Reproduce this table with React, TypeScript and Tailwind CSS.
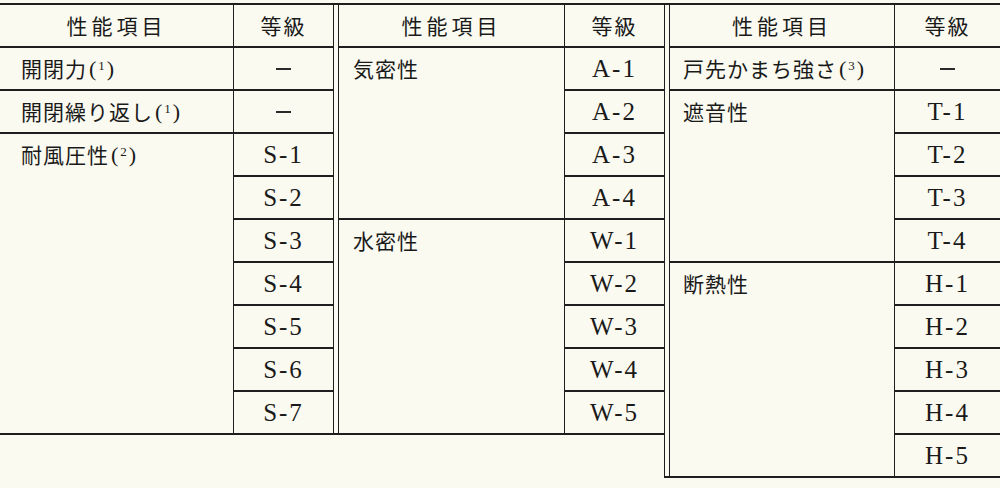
import React from "react";

type Group = { label: React.ReactNode; grades: string[] };

function Note({ n }: { n: string }) {
  return (
    <span className="ml-[2px] font-['Liberation_Serif'] text-[22px] tracking-[2px]">
      (<sup className="text-[13px]">{n}</sup>)
    </span>
  );
}

const left: Group[] = [
  { label: <>開閉力<Note n="1" /></>, grades: ["—"] },
  { label: <>開閉繰り返し<Note n="1" /></>, grades: ["—"] },
  { label: <>耐風圧性<Note n="2" /></>, grades: ["S-1", "S-2", "S-3", "S-4", "S-5", "S-6", "S-7"] },
];

const middle: Group[] = [
  { label: "気密性", grades: ["A-1", "A-2", "A-3", "A-4"] },
  { label: "水密性", grades: ["W-1", "W-2", "W-3", "W-4", "W-5"] },
];

const right: Group[] = [
  { label: <>戸先かまち強さ<Note n="3" /></>, grades: ["—"] },
  { label: "遮音性", grades: ["T-1", "T-2", "T-3", "T-4"] },
  { label: "断熱性", grades: ["H-1", "H-2", "H-3", "H-4", "H-5"] },
];

function Grade({ g }: { g: string }) {
  return (
    <div className="flex h-[43px] items-center justify-center border-b-2 border-[#1e1e1e]">
      {g === "—" ? (
        <span className="block h-[2px] w-[15px] bg-[#2a2a2a]" />
      ) : (
        <span className="font-['Liberation_Serif'] text-[25px] tracking-[2px]">{g}</span>
      )}
    </div>
  );
}

function Table({
  groups,
  width,
  labelWidth,
  pad,
}: {
  groups: Group[];
  width: string;
  labelWidth: string;
  pad: string;
}) {
  return (
    <div className={`${width} flex flex-col border-t-2 border-[#1e1e1e]`}>
      <div className="flex h-[43px] border-b-2 border-[#1e1e1e]">
        <div className={`${labelWidth} flex items-center justify-center border-r border-[#1e1e1e] tracking-[4px]`}>
          性能項目
        </div>
        <div className="flex flex-1 items-center justify-center tracking-[2px]">等級</div>
      </div>
      {groups.map((grp, i) => (
        <div key={i} className="flex">
          <div className={`${labelWidth} border-r border-b-2 border-[#1e1e1e]`}>
            <div className={`flex h-[41px] items-center ${pad} tracking-[1px]`}>{grp.label}</div>
          </div>
          <div className="flex flex-1 flex-col">
            {grp.grades.map((g) => (
              <Grade key={g} g={g} />
            ))}
          </div>
        </div>
      ))}
    </div>
  );
}

export default function App() {
  return (
    <div className="flex h-[488px] w-[1000px] items-start overflow-hidden bg-[#fbfaf1] pt-[3px] font-['Noto_Sans_CJK_JP',sans-serif] text-[21px] text-[#1a1a1a]">
      <Table groups={left} width="w-[333px]" labelWidth="w-[234px]" pad="pl-[21px]" />
      <div className="h-[432px] w-[6px] border-x border-y-2 border-[#1e1e1e]" />
      <Table groups={middle} width="w-[325px]" labelWidth="w-[226px]" pad="pl-[14px]" />
      <div className="h-[475px] w-[6px] border-x border-y-2 border-[#1e1e1e]" />
      <Table groups={right} width="flex-1" labelWidth="w-[225px]" pad="pl-[13px]" />
    </div>
  );
}
